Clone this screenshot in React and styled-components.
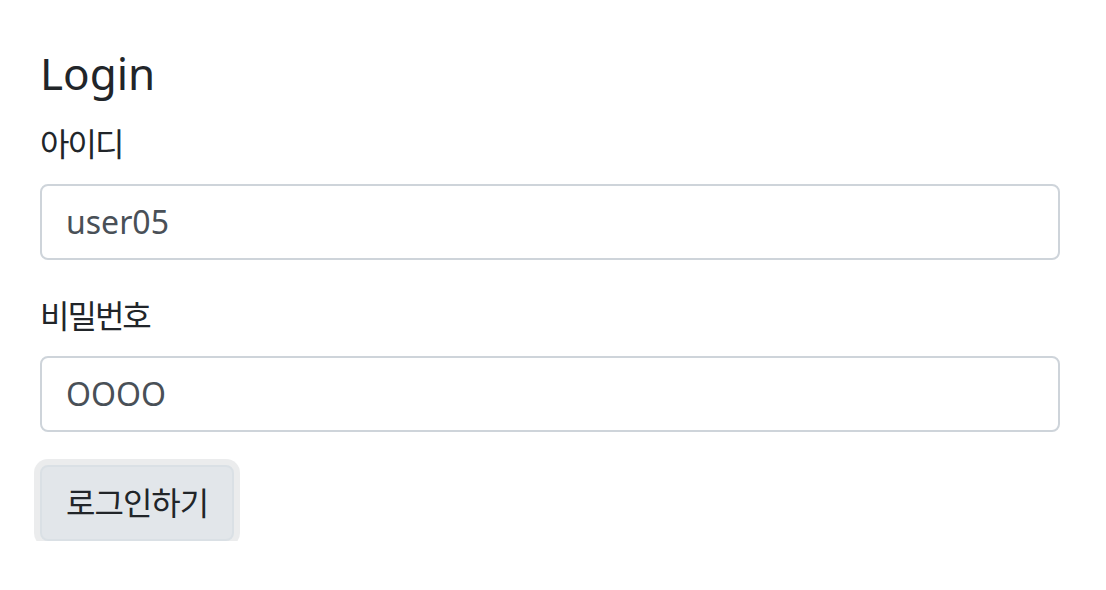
import React from "react";
import styled, { createGlobalStyle } from "styled-components";

const Global = createGlobalStyle`
  html, body { margin: 0; padding: 0; background: #fff; }
  body {
    font-family: "Noto Sans", "Noto Sans CJK KR", sans-serif;
    color: #212529;
  }
`;

const Page = styled.div`
  padding: 47px 46px 0 40px;
  box-sizing: border-box;
  width: 1106px;
`;

const Title = styled.h4`
  margin: 0 0 20px;
  font-size: 44px;
  font-weight: 400;
  line-height: 1.2;
`;

const Field = styled.div`
  display: flex;
  flex-direction: column;
  margin-bottom: ${(p) => p.$mb || 0}px;
`;

const Label = styled.label`
  display: block;
  margin-bottom: 16px;
  font-size: 32px;
  line-height: 1.5;
  letter-spacing: -2px;
`;

const Input = styled.input`
  display: block;
  width: 100%;
  height: 76px;
  box-sizing: border-box;
  padding: 12px 24px;
  font-family: "Noto Sans", "Noto Sans CJK KR", sans-serif;
  font-size: 32px;
  line-height: 1.5;
  color: #495057;
  background: #fff;
  border: 2px solid #ced4da;
  border-radius: 8px;
  outline: none;
`;

const Button = styled.button`
  display: inline-block;
  align-self: flex-start;
  margin-top: 33px;
  padding: 12px 24px;
  font-family: "Noto Sans", "Noto Sans CJK KR", sans-serif;
  font-size: 32px;
  line-height: 1.5;
  letter-spacing: -1px;
  color: #212529;
  background: #e2e6ea;
  border: 2px solid #dae0e5;
  border-radius: 8px;
  box-shadow: 0 0 0 6px rgba(216, 217, 219, 0.5);
`;

export default function App() {
  return (
    <>
      <Global />
      <Page>
        <Title>Login</Title>
        <Field $mb={32}>
          <Label>아이디</Label>
          <Input defaultValue="user05" />
        </Field>
        <Field>
          <Label>비밀번호</Label>
          <Input defaultValue="OOOO" />
        </Field>
        <Button>로그인하기</Button>
      </Page>
    </>
  );
}
